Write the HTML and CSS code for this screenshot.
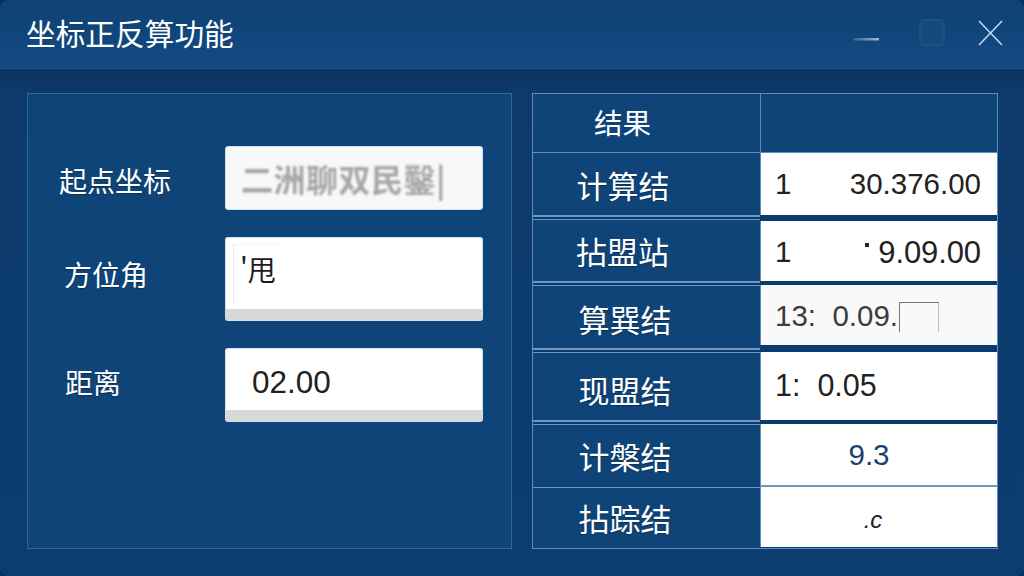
FILE: index.html
```html
<!DOCTYPE html>
<html lang="zh-CN">
<head>
<meta charset="utf-8">
<title>坐标正反算功能</title>
<link rel="stylesheet" href="styles.css">
</head>
<body>
<div class="window">
  <header class="titlebar">
    <h1 class="title">坐标正反算功能</h1>
    <div class="controls">
      <svg class="ctl ctl-min" viewBox="0 0 28 28">
        <defs><linearGradient id="fade"><stop offset="0" stop-color="#2f6494"/><stop offset="1" stop-color="#9db8d2"/></linearGradient></defs>
        <rect x="1" y="16" width="26" height="2.5" fill="url(#fade)"/>
      </svg>
      <svg class="ctl ctl-max" viewBox="0 0 28 28"><rect x="2" y="1" width="24" height="25" rx="4" fill="#164a7d" stroke="#1f5688" stroke-width="1.5"/></svg>
      <svg class="ctl ctl-close" viewBox="0 0 28 28"><path d="M3 2L26 26M26 2L3 26" stroke="#c4d6e8" stroke-width="1.6" fill="none"/></svg>
    </div>
  </header>
  <main class="content">
    <section class="form-panel">
      <div class="form-row row-a">
        <span class="f-label la">起点坐标</span>
        <div class="field field-blur"><span class="blur-text">二洲聊双民鑿|</span></div>
      </div>
      <div class="form-row row-b">
        <span class="f-label lb">方位角</span>
        <div class="field field-band field-tall"><span class="inner-box">'甩</span></div>
      </div>
      <div class="form-row row-c">
        <span class="f-label lc">距离</span>
        <div class="field field-band field-short"><span class="val-c">02.00</span></div>
      </div>
    </section>
    <section class="results">
      <div class="r-head"><span class="r-head-label">结果</span></div>
      <div class="r-head r-head-empty"></div>

      <div class="r-label r1">计算结</div>
      <div class="r-value r1v spread"><span>1</span><span>30.376.00</span></div>

      <div class="r-label r2">拈盟站</div>
      <div class="r-value r2v spread"><span>1</span><span class="wide"><i class="tick"></i>9.09.00</span></div>

      <div class="r-label r3">算巽结</div>
      <div class="r-value r3v soft"><span>13:&nbsp;&nbsp;0.09.</span><span class="ghost-box"></span></div>

      <div class="r-label r4">现盟结</div>
      <div class="r-value r4v"><span class="up">1:&nbsp;&nbsp;0.05</span></div>

      <div class="r-label r5">计槃结</div>
      <div class="r-value r5v center"><span class="navy">9.3</span></div>

      <div class="r-label r6">拈踪结</div>
      <div class="r-value r6v center"><span class="tiny">.c</span></div>
    </section>
  </main>
</div>
</body>
</html>
```

FILE: styles.css
```css
* { box-sizing: border-box; }
html, body { margin: 0; height: 100%; background: #0a2f5c; overflow: hidden; }
body { font-family: "Noto Sans CJK SC", "Liberation Sans", sans-serif; }

.window {
  width: 1024px; height: 576px;
  border-radius: 9px;
  overflow: hidden;
  display: flex; flex-direction: column;
  background: #0c3a6b;
}

.titlebar {
  height: 69px;
  flex: none;
  display: flex; align-items: center; justify-content: space-between;
  padding: 0 20px 0 26px;
  background: linear-gradient(180deg, #0f4275 0%, #124a80 100%);
  border-bottom: 1px solid #1c5285;
}
.title { margin: 0 0 3px; font-size: 29.7px; font-weight: 400; color: #fff; line-height: 1; white-space: nowrap; }
.controls { display: flex; align-items: center; gap: 30px; }
.ctl { display: block; width: 28px; height: 28px; }
.ctl-min { margin: 4px 8px 0 0; }
.ctl-max { margin-bottom: 2px; }
.ctl-close { margin-bottom: 2px; }

.content {
  flex: 1;
  display: flex; gap: 20px;
  padding: 24px 26px 27px 27px;
  background: linear-gradient(180deg, #0a3360 0%, #0c3a6b 24px, #0d3d70 100%);
}

.form-panel {
  width: 485px;
  background: #0f4478;
  border: 1px solid #2f6797;
  display: flex; flex-direction: column;
  padding: 52px 28px 0 0;
}
.form-row { display: flex; align-items: center; justify-content: flex-end; }
.row-b { margin-top: 27px; }
.row-c { margin-top: 28px; }
.f-label { flex: 1; color: #fff; font-size: 28px; line-height: 1; white-space: nowrap; text-shadow: 0 1px 1px rgba(0, 0, 0, .3); }
.la { padding-left: 31px; padding-top: 4px; }
.lb { padding-left: 36px; padding-bottom: 10px; }
.lc { padding-left: 37px; padding-bottom: 5px; }

.field {
  width: 258px;
  background: #fff;
  border-radius: 3px;
  border: 1px solid #cfe0f0;
  color: #222;
  display: flex; align-items: center;
}
.field-blur { height: 64px; background: #f8f8f8; padding-left: 15px; }
.blur-text { font-size: 32px; font-weight: 700; line-height: 1; color: #a6a6a6; filter: blur(1.3px); white-space: nowrap; letter-spacing: .5px; }
.field-band { border-bottom: 11px solid #d8d8d6; box-shadow: 0 1px 0 #cfe3f6; align-items: flex-start; }
.field-tall { height: 83px; padding: 6px 0 0 7px; }
.field-short { height: 73px; padding: 15px 0 0 26px; }
.inner-box {
  display: block; height: 60px; width: 50px;
  padding: 9px 0 0 6px;
  font-size: 28px; line-height: 1.1; color: #1c1c1c;
  border-left: 1px solid #dceaf6; border-top: 1px solid #eef5fb;
  white-space: nowrap;
}
.val-c { font-family: "Liberation Sans", sans-serif; font-size: 31.5px; line-height: 1.2; color: #222; }

.results {
  width: 466px;
  display: grid;
  grid-template-columns: 227px 1fr;
  grid-template-rows: 59px 66px 66px 67px 72px 63px 1fr;
  background: #0c3a6c;
  border: 1px solid #5f8db7;
}
.r-head, .r-label { background: #0f4478; color: #fff; display: flex; align-items: center; justify-content: center; white-space: nowrap; }
.r-head { border-bottom: 1px solid #5f8db7; }
.r-head-label { font-size: 28.5px; line-height: 1; padding-right: 48px; padding-bottom: 2px; }
.r-head-empty { border-left: 1px solid #5f8db7; }

.r-label {
  font-size: 31px; line-height: 1;
  border-bottom: 2px solid #6c98bf;
  border-top: 1px solid #6c98bf;
  margin-bottom: 2px;
  text-shadow: 0 1px 1px rgba(0, 0, 0, .3);
  padding-right: 43px;
}
.r-value {
  background: #fff;
  font-family: "Liberation Sans", sans-serif;
  font-size: 29.5px; line-height: 1; color: #222;
  display: flex; align-items: center;
  padding: 0 16px 0 14px;
  white-space: nowrap;
  border-left: 1px solid #5f8db7;
  margin-bottom: 4px;
}
.r1 { padding-right: 47px; border-top: 0; padding-top: 0; }
.r2 { padding-right: 48px; padding-top: 0; }
.r3 { padding-top: 2px; }
.r4 { padding-top: 6px; }
.r5 { border-bottom: 0; margin-bottom: 0; padding-bottom: 2px; }
.r6 { border-bottom: 0; margin-bottom: 0; padding-bottom: 2px; }
.r2v { margin-top: 2px; padding-top: 2px; }
.r3v { margin-bottom: 7px; padding-top: 2px; }
.r5v { border-bottom: 2px solid #6c98bf; margin-bottom: 0; }
.r6v { margin-bottom: 1px; }
.spread { justify-content: space-between; }
.wide { font-size: 31px; letter-spacing: -.1px; }
.tick { display: inline-block; width: 4px; height: 4px; background: #222; vertical-align: 16px; margin-right: 9px; }
.soft { color: #3c3c3c; background: #f9f9f9; }
.ghost-box {
  display: block; width: 40px; height: 30px; margin-left: 1px; margin-top: 2px;
  border: 1px solid #9c9c9c; border-bottom: 0; border-color: #777 #bbb transparent #777;
}
.up { padding-bottom: 2px; font-size: 30.5px; }
.center { justify-content: center; }
.navy { color: #1d3f70; padding-right: 18px; }
.tiny { font-size: 24px; font-style: italic; padding-right: 10px; padding-top: 6px; }
```
